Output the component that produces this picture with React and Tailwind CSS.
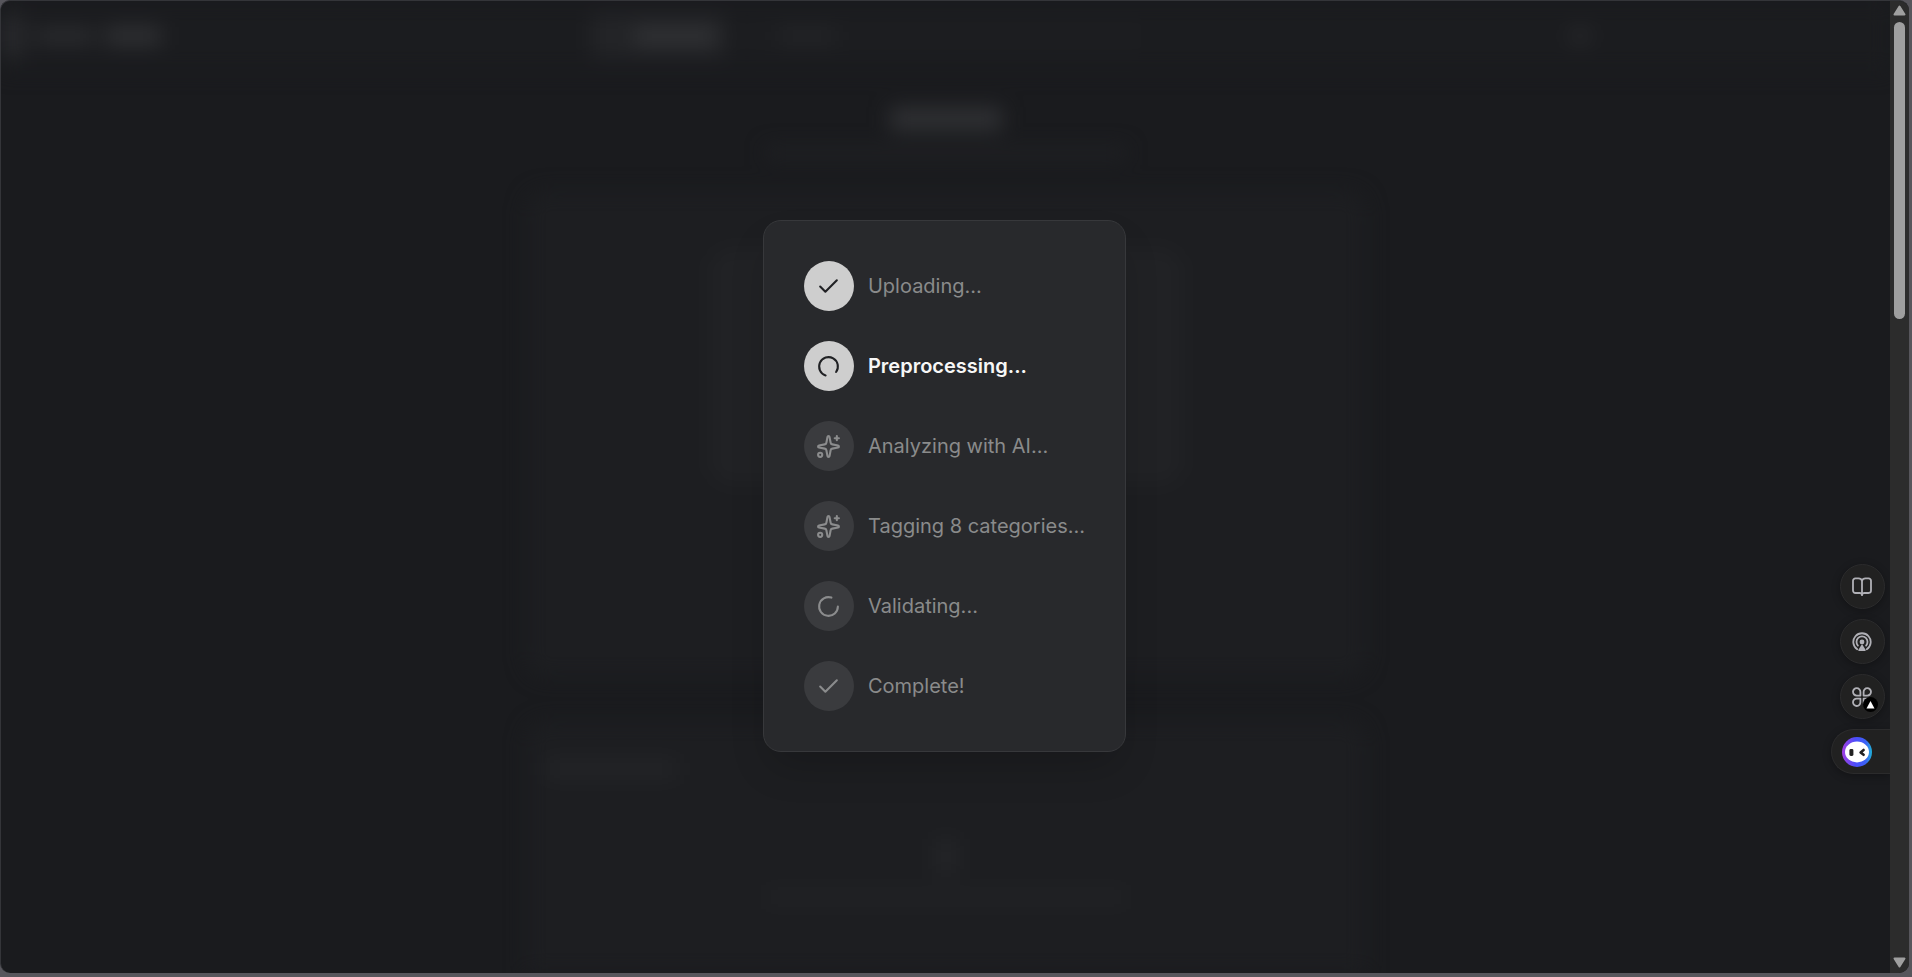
import React from 'react';
import { Check, Sparkles, LoaderCircle } from 'lucide-react';

const STEPS = [
  { label: 'Uploading...', icon: 'check', status: 'done' },
  { label: 'Preprocessing...', icon: 'loader', status: 'active' },
  { label: 'Analyzing with AI...', icon: 'sparkles', status: 'pending' },
  { label: 'Tagging 8 categories...', icon: 'sparkles', status: 'pending' },
  { label: 'Validating...', icon: 'loader', status: 'pending' },
  { label: 'Complete!', icon: 'check', status: 'pending' },
];

const StepIcon = ({ icon, status }) => {
  if (icon === 'check') return <Check size={25} />;
  if (icon === 'sparkles') return <Sparkles size={25} />;
  return <LoaderCircle size={25} className={status === 'active' ? 'rotate-[108deg]' : ''} />;
};

const Step = ({ label, icon, status }) => {
  const lit = status !== 'pending';
  return (
    <li className="flex items-center gap-[14px]">
      <span className={`flex size-[50px] shrink-0 items-center justify-center rounded-full ${lit ? 'bg-[#cecece] text-[#202124]' : 'bg-[#3a3b3e] text-[#8b8c8d]'}`}>
        <StepIcon icon={icon} status={status} />
      </span>
      <span className={`text-[20px] leading-[30px] whitespace-nowrap ${status === 'active' ? 'font-semibold text-[#f7f7f7]' : 'text-[#8a8b8b]'}`}>{label}</span>
    </li>
  );
};

const ProgressDialog = () => (
  <div role="dialog" aria-label="Progress" className="rounded-[18px] border border-[#37383b] bg-[#28292c] p-10 shadow-[0_20px_40px_-8px_rgba(0,0,0,0.2)]">
    <ul className="flex flex-col gap-[30px]">
      {STEPS.map(s => <Step key={s.label} {...s} />)}
    </ul>
  </div>
);

// page behind the dialog, out of focus
const PageBehind = () => (
  <div aria-hidden="true" className="flex h-full flex-col blur-[10px]">
    <div className="grid h-[70px] shrink-0 grid-cols-[590px_550px_1fr] items-center bg-[#1b1c1f]">
      <div className="flex items-center gap-3">
        <div className="h-10 w-6 bg-[#28292c]" />
        <div className="h-4 w-14 bg-[#2b2c2f]" />
        <div className="h-5 w-14 bg-[#2e2f32]" />
      </div>
      <div className="flex items-center gap-5">
        <div className="flex h-11 w-[136px] shrink-0 items-center justify-end rounded-lg bg-[#232427] pr-3">
          <div className="h-4 w-20 bg-[#323336]" />
        </div>
        <div className="flex h-10 grow items-center rounded-lg bg-[#1c1d20] pl-8">
          <div className="h-4 w-14 bg-[#232427]" />
        </div>
      </div>
      <div className="flex justify-end pr-[300px]">
        <div className="size-5 rounded-full bg-[#27282b]" />
      </div>
    </div>
    <div className="mx-auto flex w-[840px] grow flex-col items-center pt-9">
      <div className="h-6 w-[112px] bg-[#2f3033]" />
      <div className="mt-4 h-3 w-[360px] bg-[#202124]" />
      <div className="mt-8 flex h-[486px] w-full shrink-0 justify-center rounded-[20px] bg-[#1d1e21] pt-[58px]">
        <div className="h-[235px] w-[472px] rounded-[20px] bg-[#212225]" />
      </div>
      <div className="mt-11 flex w-full grow flex-col items-center rounded-t-[20px] bg-[#1d1e21] px-5 pt-10">
        <div className="h-4 w-[130px] self-start bg-[#242528]" />
        <div className="mt-[62px] h-9 w-5 bg-[#242528]" />
        <div className="mt-4 h-3 w-[360px] bg-[#222326]" />
      </div>
    </div>
  </div>
);

const BookIcon = () => (
  <svg width="20" height="20" viewBox="0 0 20 20" fill="none" stroke="currentColor" strokeWidth="1.8" strokeLinecap="round" strokeLinejoin="round">
    <path d="M10 3.6v14.6" />
    <path d="M10 3.6C9.4 2 8.2 1.4 6.6 1.4H3.4A2.4 2.4 0 0 0 1 3.8v9.8A2.4 2.4 0 0 0 3.4 16h4.4c1.2 0 2 .6 2.2 1.6.2-1 1-1.6 2.2-1.6h4.4a2.4 2.4 0 0 0 2.4-2.4V3.8a2.4 2.4 0 0 0-2.4-2.4h-3.2C11.8 1.4 10.6 2 10 3.6z" />
  </svg>
);

const PodcastIcon = () => (
  <svg width="20" height="20" viewBox="0 0 20 20" fill="none" stroke="currentColor" strokeWidth="1.8" strokeLinecap="round">
    <path d="M5.2 17.2a8.7 8.7 0 1 1 9.6 0" />
    <path d="M5.9 13.6a5.5 5.5 0 1 1 8.2 0" />
    <circle cx="10" cy="10" r="2.4" fill="currentColor" stroke="none" />
    <path d="M10 13.6 12.8 18.2H7.2z" fill="currentColor" strokeLinejoin="round" />
  </svg>
);

const CloverIcon = () => (
  <svg width="20" height="20" viewBox="0 0 20 20" fill="none" stroke="currentColor" strokeWidth="1.8" strokeLinejoin="round">
    <path d="M8.4 8.6V5A3.7 3.7 0 1 0 4.7 8.6z" />
    <path d="M11.6 8.6V5a3.7 3.7 0 1 1 3.7 3.6z" />
    <path d="M8.4 11.6v3.6a3.7 3.7 0 1 1-3.7-3.6z" />
    <path d="M11.6 11.6v3.6a3.7 3.7 0 1 0 3.7-3.6z" />
  </svg>
);

const BotLogo = () => (
  <svg width="30" height="30" viewBox="0 0 30 30">
    <defs>
      <linearGradient id="bot-ring" x1="0" y1="0.6" x2="1" y2="0.6">
        <stop offset="0" stopColor="#a23fe0" />
        <stop offset="0.45" stopColor="#4b4dfb" />
        <stop offset="0.8" stopColor="#3a62f5" />
        <stop offset="1" stopColor="#1fb4d8" />
      </linearGradient>
    </defs>
    <circle cx="15" cy="15" r="15" fill="url(#bot-ring)" />
    <ellipse cx="15" cy="15" rx="12" ry="10.4" fill="#fff" />
    <rect x="7.4" y="12" width="4" height="7" rx="1.4" fill="#222" />
    <path d="M21.6 13 18.6 15.4 21.6 17.8" fill="none" stroke="#222" strokeWidth="2.6" strokeLinecap="round" strokeLinejoin="round" />
  </svg>
);

const roundButton = 'relative mr-[5px] flex size-[45px] items-center justify-center rounded-full border border-[#2b2b2c] bg-[#212121] pr-[2px] text-[#b0b0b6] shadow-[0_2px_8px_rgba(0,0,0,0.3)]';

const FloatingTools = () => (
  <div className="absolute top-[563px] right-0 flex flex-col items-end gap-[10px]">
    <button type="button" aria-label="Read" className={roundButton}><BookIcon /></button>
    <button type="button" aria-label="Podcast" className={roundButton}><PodcastIcon /></button>
    <button type="button" aria-label="Apps" className={roundButton}>
      <CloverIcon />
      <span className="absolute right-[6px] bottom-[6px] flex size-[15px] items-center justify-center rounded-full bg-black">
        <svg width="9" height="8" viewBox="0 0 9 8"><path d="M4.5 0 8.5 7.5H.5z" fill="#fff" /></svg>
      </span>
    </button>
    <button type="button" aria-label="Assistant" className="flex h-[45px] w-[59px] items-center rounded-l-full border border-r-0 border-[#2b2b2c] bg-[#212121] pl-[10px] shadow-[0_2px_8px_rgba(0,0,0,0.3)]">
      <BotLogo />
    </button>
  </div>
);

const Scrollbar = () => (
  <div aria-hidden="true" className="flex w-[19px] shrink-0 flex-col items-center bg-[#2c2c2c] pt-1 pb-[5px]">
    <svg width="13" height="11" viewBox="0 0 13 11" className="shrink-0"><path d="M6.5 1.5 11.5 9.5h-10z" fill="#9f9f9f" stroke="#9f9f9f" strokeWidth="2" strokeLinejoin="round" /></svg>
    <div className="mt-[6px] h-[30.8%] w-[11px] rounded-full bg-[#9f9f9f]" />
    <svg width="13" height="11" viewBox="0 0 13 11" className="mt-auto shrink-0"><path d="M6.5 9.5 11.5 1.5h-10z" fill="#9f9f9f" stroke="#9f9f9f" strokeWidth="2" strokeLinejoin="round" /></svg>
  </div>
);

export default function App() {
  return (
    <div className="h-screen bg-[#57565c] pr-[3px] pb-[4px] font-['Inter',sans-serif]">
      <div className="flex h-full overflow-hidden rounded-[10px] border-t border-l border-[#343539] bg-[#1a1b1e]">
        <main className="relative grow overflow-hidden">
          <PageBehind />
          <div className="absolute inset-0 flex items-center justify-center pr-[2px] pb-[2px]">
            <ProgressDialog />
          </div>
          <FloatingTools />
        </main>
        <Scrollbar />
      </div>
    </div>
  );
}
